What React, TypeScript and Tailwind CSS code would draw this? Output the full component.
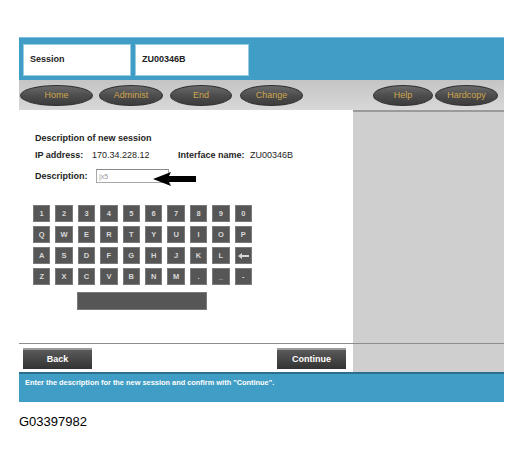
const font = { fontFamily: '"Liberation Sans", Arial, sans-serif' };

const navLeft = [
  { label: "Home", w: "w-[73px]", ml: "ml-[1px]" },
  { label: "Administ", w: "w-[64px]", ml: "ml-[6px]" },
  { label: "End", w: "w-[62px]", ml: "ml-[7px]" },
  { label: "Change", w: "w-[63px]", ml: "ml-[8px]" },
];

const navRight = [
  { label: "Help", w: "w-[60px]", ml: "ml-[70px]" },
  { label: "Hardcopy", w: "w-[63px]", ml: "ml-[2px]" },
];

const keyRows = [
  ["1", "2", "3", "4", "5", "6", "7", "8", "9", "0"],
  ["Q", "W", "E", "R", "T", "Y", "U", "I", "O", "P"],
  ["A", "S", "D", "F", "G", "H", "J", "K", "L", "back"],
  ["Z", "X", "C", "V", "B", "N", "M", ".", "_", "-"],
];

function NavButton({ label, w, ml }: { label: string; w: string; ml: string }) {
  return (
    <div
      className={`${w} ${ml} flex h-[21px] items-center justify-center rounded-[50%] border border-[#2e2e2e] bg-gradient-to-b from-[#6a6a6a] via-[#4d4d4d] to-[#3c3c3c] text-[9px] text-[#cfa64c]`}
    >
      {label}
    </div>
  );
}

function Key({ label }: { label: string }) {
  return (
    <div className="flex h-[17px] items-center justify-center border border-[#7a7a7a] bg-[#565656] text-[7.5px] font-bold text-[#d8d8d8]">
      {label === "back" ? (
        <svg width="11" height="6" viewBox="0 0 11 6">
          <path d="M0 3 L4 0 L4 2 L11 2 L11 4 L4 4 L4 6 Z" fill="#d8d8d8" />
        </svg>
      ) : (
        label
      )}
    </div>
  );
}

function DarkButton({ label }: { label: string }) {
  return (
    <div className="flex h-[21px] w-[69px] items-center justify-center border-t-2 border-[#9a9a9a] bg-gradient-to-b from-[#5a5a5a] to-[#333] text-[9px] font-bold text-white">
      {label}
    </div>
  );
}

export default function App() {
  return (
    <div className="min-h-[462px] w-[523px] bg-white pl-[19px] pt-[37px]" style={font}>
      <div className="w-[485px]">
        {/* session header */}
        <div className="flex h-[43px] gap-[4px] border-t border-[#7cc0dd] bg-[#409dc5] pl-[4px] pt-[6px]">
          <div className="flex h-[32px] w-[108px] items-center border border-[#9ccbe0] bg-white pl-[6px] text-[9px] font-bold text-[#222]">
            Session
          </div>
          <div className="flex h-[32px] w-[114px] items-center border border-[#9ccbe0] bg-white pl-[6px] text-[9px] font-bold text-[#222]">
            ZU00346B
          </div>
        </div>

        {/* nav bar */}
        <div className="flex h-[30px] items-center bg-gradient-to-b from-[#c4c4c4] to-[#d8d8d8] pt-[1px]">
          {navLeft.map((b) => (
            <NavButton key={b.label} {...b} />
          ))}
          {navRight.map((b) => (
            <NavButton key={b.label} {...b} />
          ))}
        </div>

        {/* body */}
        <div className="flex">
          <div className="h-[233px] w-[334px] bg-white pl-[16px] pt-[23px] text-[9px] leading-[11px] text-[#1e1e1e]">
            <div className="font-bold">Description of new session</div>
            <div className="mt-[6px] flex">
              <span className="w-[57px] font-bold">IP address:</span>
              <span className="w-[86px]">170.34.228.12</span>
              <span className="w-[72px] font-bold">Interface name:</span>
              <span>ZU00346B</span>
            </div>
            <div className="relative mt-[8px] flex h-[14px] items-center">
              <span className="w-[61px] font-bold">Description:</span>
              <div className="flex h-[14px] w-[73px] items-center border border-[#a8a8a8] border-t-[#8a8a8a] pl-[2px] text-[7px] text-[#9a9a9a]">
                |x5
              </div>
              <svg className="absolute left-[118px] top-[3px]" width="44" height="14" viewBox="0 0 44 14">
                <path d="M0 7 L18 0 L16 4 L43 4 L43 10 L16 10 L18 14 Z" fill="#000" />
              </svg>
            </div>

            {/* on-screen keyboard */}
            <div className="ml-[-2px] mt-[22px] grid w-[219px] grid-cols-10 gap-x-[5px] gap-y-[4px]">
              {keyRows.flat().map((k, i) => (
                <Key key={i} label={k} />
              ))}
            </div>
            <div className="ml-[42px] mt-[7px] h-[18px] w-[130px] border border-[#7a7a7a] bg-[#565656]" />
          </div>
          <div className="h-[233px] w-[151px] border-t-2 border-[#9a9a9a] bg-[#cfcfcf]" />
        </div>

        {/* footer buttons */}
        <div className="flex h-[29px] border-t border-[#8c8c8c]">
          <div className="flex w-[334px] bg-white pl-[4px] pt-[4px]">
            <DarkButton label="Back" />
            <div className="ml-[185px]">
              <DarkButton label="Continue" />
            </div>
          </div>
          <div className="w-[151px] bg-[#cfcfcf]" />
        </div>

        {/* status line */}
        <div className="h-[30px] border-t-2 border-[#2b6f8e] bg-[#409dc5] pl-[6px] pt-[4px] text-[7.4px] font-bold leading-[9px] text-white">
          Enter the description for the new session and confirm with "Continue".
        </div>
      </div>

      <div className="mt-[12px] text-[13px] leading-[15px] text-black">G03397982</div>
    </div>
  );
}
